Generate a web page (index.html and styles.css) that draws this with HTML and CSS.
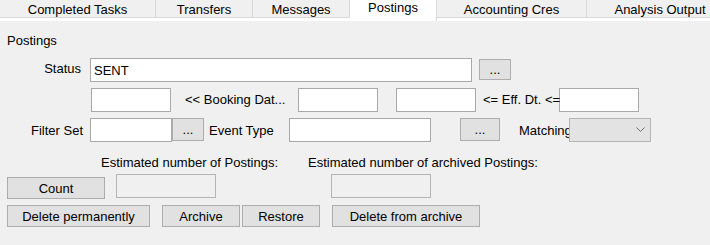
FILE: index.html
```html
<!DOCTYPE html>
<html lang="en">
<head>
    <meta charset="UTF-8">
    <title>Postings</title>
    <link rel="stylesheet" href="styles.css">
</head>
<body>
    <div class="tabs">
        <div class="tab tab-completed">Completed Tasks</div>
        <div class="tab tab-transfers">Transfers</div>
        <div class="tab tab-messages">Messages</div>
        <div class="tab tab-postings selected">Postings</div>
        <div class="tab tab-accounting">Accounting Cres</div>
        <div class="tab tab-analysis">Analysis Output</div>
    </div>

    <div class="page">
        <div class="group-title">Postings</div>

        <div class="row row-status">
            <label class="lbl lbl-status">Status</label>
            <input class="textbox tb-status" type="text" value="SENT">
            <button class="btn btn-dots-status">...</button>
        </div>

        <div class="row row-dates">
            <input class="textbox tb-date tb-book-from" type="text">
            <span class="lbl lbl-booking">&lt;&lt; Booking Dat...</span>
            <input class="textbox tb-date" type="text">
            <input class="textbox tb-date tb-eff-from" type="text">
            <span class="lbl lbl-eff">&lt;= Eff. Dt. &lt;=</span>
            <input class="textbox tb-date" type="text">
        </div>

        <div class="row row-filter">
            <label class="lbl lbl-filter">Filter Set</label>
            <input class="textbox tb-filter" type="text">
            <button class="btn btn-dots-filter">...</button>
            <label class="lbl lbl-event">Event Type</label>
            <input class="textbox tb-event" type="text">
            <button class="btn btn-dots-event">...</button>
            <label class="lbl lbl-matching">Matching</label>
            <div class="combo">
                <svg width="9" height="5" viewBox="0 0 9 5">
                    <polyline points="0.5,0.5 4.5,4.5 8.5,0.5" fill="none" stroke="#6d6d6d" stroke-width="1"/>
                </svg>
            </div>
        </div>

        <div class="row-estimates">
            <span class="lbl est-postings">Estimated number of Postings:</span>
            <span class="lbl">Estimated number of archived Postings:</span>
        </div>

        <div class="row row-count">
            <button class="btn btn-count">Count</button>
            <input class="textbox tb-readonly tb-count" type="text" disabled>
            <input class="textbox tb-readonly tb-archived" type="text" disabled>
        </div>

        <div class="row row-actions">
            <button class="btn btn-delete">Delete permanently</button>
            <button class="btn btn-archive">Archive</button>
            <button class="btn btn-restore">Restore</button>
            <button class="btn btn-delete-archive">Delete from archive</button>
        </div>
    </div>
</body>
</html>
```

FILE: styles.css
```css
body {
    margin: 0;
    width: 710px;
    height: 245px;
    overflow: hidden;
    background-color: #f0f0f0;
    font-family: "Liberation Sans", Arial, sans-serif;
    font-size: 13px;
    line-height: 15px;
    color: #000;
}

/* tab strip */
.tabs {
    display: flex;
    align-items: flex-start;
    height: 18px;
    border-bottom: 3px solid #fff;
}
.tab {
    flex: none;
    box-sizing: border-box;
    height: 18px;
    padding-top: 2px;
    text-align: center;
    white-space: nowrap;
    background-color: #f0f0f0;
    border-right: 1px solid #d9d9d9;
    border-bottom: 1px solid #d9d9d9;
}
.tab.selected {
    height: 21px;
    padding-top: 0;
    background-color: #fff;
    border-bottom: none;
}
.tab-completed { width: 156px; }
.tab-transfers { width: 97px; }
.tab-messages { width: 97px; }
.tab-postings { width: 87px; }
.tab-accounting { width: 150px; }
.tab-analysis { width: 147px; }

/* tab page */
.page {
    padding-top: 12px;
}
.group-title {
    padding-left: 7px;
}

.row {
    display: flex;
    align-items: flex-start;
    height: 24px;
}
.row-status { margin-top: 10px; }
.row-dates { margin-top: 6px; }
.row-filter { margin-top: 6px; }
.row-count { margin-top: 4px; }
.row-actions { margin-top: 7px; }

.lbl {
    flex: none;
    box-sizing: border-box;
    white-space: nowrap;
}

.textbox {
    flex: none;
    box-sizing: border-box;
    height: 24px;
    margin: 0;
    padding: 0 3px;
    border: 1px solid #a9a9a9;
    background-color: #fff;
    font-family: inherit;
    font-size: 13px;
    color: #000;
    outline: none;
}
.tb-readonly {
    background-color: #f0f0f0;
    border-color: #b4b4b4;
}

.btn {
    flex: none;
    box-sizing: border-box;
    height: 22px;
    margin: 0;
    padding: 0;
    border: 1px solid #adadad;
    background-color: #e1e1e1;
    font-family: inherit;
    font-size: 13px;
    line-height: 15px;
    color: #000;
}

/* row 1 */
.lbl-status {
    width: 81px;
    padding-top: 3px;
    text-align: right;
}
.tb-status {
    width: 382px;
    margin-left: 9px;
}
.btn-dots-status {
    width: 32px;
    height: 21px;
    margin: 1px 0 0 7px;
}

/* row 2 */
.tb-date { width: 80px; }
.tb-book-from { margin-left: 91px; }
.lbl-booking {
    width: 127px;
    padding: 4px 0 0 14px;
}
.tb-eff-from { margin-left: 18px; }
.lbl-eff {
    position: relative;
    z-index: 1;
    width: 83px;
    padding: 4px 0 0 7px;
}

/* row 3 */
.lbl-filter {
    width: 83px;
    padding-top: 5px;
    text-align: right;
}
.tb-filter {
    width: 82px;
    margin-left: 7px;
}
.btn-dots-filter {
    width: 32px;
    height: 23px;
}
.lbl-event {
    width: 85px;
    padding: 5px 0 0 5px;
}
.tb-event { width: 142px; }
.btn-dots-event {
    width: 40px;
    height: 23px;
    margin-left: 29px;
}
.lbl-matching {
    width: 69px;
    padding: 5px 0 0 19px;
}
.combo {
    flex: none;
    box-sizing: border-box;
    width: 82px;
    height: 24px;
    display: flex;
    align-items: center;
    justify-content: flex-end;
    padding: 0 5px 2px 0;
    border: 1px solid #b5b5b5;
    background-color: #e3e3e3;
}
.combo svg { display: block; }

/* estimates */
.row-estimates {
    display: flex;
    margin-top: 13px;
    padding-left: 101px;
}
.est-postings { width: 207px; }

/* row 5 */
.btn-count {
    width: 98px;
    margin: 3px 0 0 7px;
}
.tb-count {
    width: 100px;
    margin-left: 11px;
}
.tb-archived {
    width: 100px;
    margin-left: 115px;
}

/* row 6 */
.btn-delete {
    width: 143px;
    margin-left: 7px;
}
.btn-archive {
    width: 78px;
    margin-left: 12px;
}
.btn-restore {
    width: 78px;
    margin-left: 2px;
}
.btn-delete-archive {
    width: 148px;
    margin-left: 12px;
}
```
